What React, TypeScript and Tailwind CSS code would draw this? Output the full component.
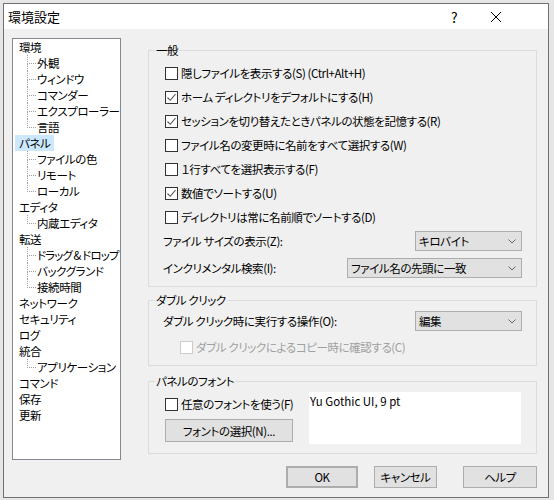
import type { ReactNode } from "react";

type TreeNode = { label: string; children?: string[]; selected?: boolean };

const TREE: TreeNode[] = [
  { label: "環境", children: ["外観", "ウィンドウ", "コマンダー", "エクスプローラー", "言語"] },
  { label: "パネル", children: ["ファイルの色", "リモート", "ローカル"], selected: true },
  { label: "エディタ", children: ["内蔵エディタ"] },
  { label: "転送", children: ["ドラッグ & ドロップ", "バックグランド", "接続時間"] },
  { label: "ネットワーク" },
  { label: "セキュリティ" },
  { label: "ログ" },
  { label: "統合", children: ["アプリケーション"] },
  { label: "コマンド" },
  { label: "保存" },
  { label: "更新" },
];

const GENERAL = [
  { label: "隠しファイルを表示する(S) (Ctrl+Alt+H)", checked: false },
  { label: "ホーム ディレクトリをデフォルトにする(H)", checked: true },
  { label: "セッションを切り替えたときパネルの状態を記憶する(R)", checked: true },
  { label: "ファイル名の変更時に名前をすべて選択する(W)", checked: false },
  { label: "１行すべてを選択表示する(F)", checked: false },
  { label: "数値でソートする(U)", checked: true },
  { label: "ディレクトリは常に名前順でソートする(D)", checked: false },
];

function CheckBox({ checked, disabled }: { checked?: boolean; disabled?: boolean }) {
  return (
    <span
      className={`flex h-[13px] w-[13px] shrink-0 items-center justify-center border bg-white ${
        disabled ? "border-[#cccccc]" : "border-[#333333]"
      }`}
    >
      {checked && (
        <svg viewBox="0 0 11 11" className="h-[11px] w-[11px]">
          <path d="M1.5 5.5 L4.3 8.3 L9.5 2.2" fill="none" stroke="#5a5a5a" strokeWidth="1.1" />
        </svg>
      )}
    </span>
  );
}

function Select({ value, width }: { value: string; width: string }) {
  return (
    <div
      className={`flex h-[20px] items-center justify-between border border-[#adadad] bg-[#e1e1e1] pl-[3px] pr-[5px] ${width}`}
    >
      <span className="whitespace-nowrap">{value}</span>
      <svg viewBox="0 0 8 5" className="h-[5px] w-[8px]">
        <path d="M0.5 0.5 L4 4 L7.5 0.5" fill="none" stroke="#666666" strokeWidth="1" />
      </svg>
    </div>
  );
}

function Group({ title, children, className = "" }: { title: string; children: ReactNode; className?: string }) {
  return (
    <fieldset className={`border border-[#dcdcdc] ${className}`}>
      <legend className="ml-[6px] px-[1px] leading-[16px]">{title}</legend>
      {children}
    </fieldset>
  );
}

function Button({ children, className = "" }: { children: ReactNode; className?: string }) {
  return (
    <div className={`flex items-center justify-center whitespace-nowrap border border-[#adadad] bg-[#e1e1e1] ${className}`}>
      {children}
    </div>
  );
}

function Tree() {
  return (
    <div className="h-[422px] w-[109px] shrink-0 overflow-hidden border border-[#828790] bg-white">
      {TREE.map((node) => (
        <div key={node.label}>
          <div className="flex h-[16px] items-center pl-[2px]">
            <span
              className={`flex h-[16px] items-center whitespace-nowrap px-[4px] ${node.selected ? "bg-[#cce8ff]" : ""}`}
            >
              {node.label}
            </span>
          </div>
          {node.children?.map((child, i) => {
            const last = i === node.children!.length - 1;
            return (
              <div key={child} className="flex h-[16px] items-center">
                <div className="ml-[14px] flex h-full w-[9px] shrink-0 flex-col">
                  <div className="h-[9px] border-b border-l border-dotted border-[#a0a0a0]" />
                  {!last && <div className="flex-1 border-l border-dotted border-[#a0a0a0]" />}
                </div>
                <span className={`whitespace-nowrap pl-[1px] ${child.length > 8 ? "tracking-[-0.9px]" : ""}`}>
                  {child}
                </span>
              </div>
            );
          })}
        </div>
      ))}
    </div>
  );
}

export default function App() {
  return (
    <div className="h-[500px] w-[554px] overflow-hidden bg-[#e6e6e6] p-[3px] pr-[5px] font-['Noto_Sans_CJK_JP',sans-serif] text-[11.5px] leading-[16px] tracking-[-0.4px] text-black [font-feature-settings:'palt']">
      <div className="flex h-[495px] flex-col border border-[#707070] bg-[#f0f0f0]">
        {/* title bar */}
        <div className="flex h-[25px] shrink-0 items-center justify-between bg-white pl-[4px]">
          <span className="text-[13px] tracking-normal">環境設定</span>
          <div className="flex h-full items-center pr-[31px]">
            <span className="w-[42px] text-center text-[14px]">?</span>
            <span className="flex w-[42px] justify-center">
              <svg viewBox="0 0 10 10" className="h-[10px] w-[10px]">
                <path d="M0 0 L10 10 M10 0 L0 10" stroke="#000" strokeWidth="1" />
              </svg>
            </span>
          </div>
        </div>

        {/* body */}
        <div className="flex flex-1 pl-[8px] pr-[11px] pt-[9px]">
          <Tree />
          <div className="ml-[27px] flex flex-1 flex-col pt-[4px]">
            <Group title="一般" className="pb-[8px]">
              <div className="px-[14px] pt-[3px]">
                {GENERAL.map((item) => (
                  <div key={item.label} className="ml-[2px] flex h-[24px] items-center gap-[3px]">
                    <CheckBox checked={item.checked} />
                    <span className="whitespace-nowrap">{item.label}</span>
                  </div>
                ))}
                <div className="mt-[2px] flex h-[20px] items-center justify-between">
                  <span>ファイル サイズの表示(Z):</span>
                  <Select value="キロバイト" width="w-[107px]" />
                </div>
                <div className="mt-[7px] flex h-[20px] items-center justify-between">
                  <span>インクリメンタル検索(I):</span>
                  <Select value="ファイル名の先頭に一致" width="w-[175px]" />
                </div>
              </div>
            </Group>

            <Group title="ダブル クリック" className="mt-[5px] pb-[8px]">
              <div className="px-[14px] pt-[3px]">
                <div className="flex h-[20px] items-center justify-between">
                  <span>ダブル クリック時に実行する操作(O):</span>
                  <Select value="編集" width="w-[107px]" />
                </div>
                <div className="ml-[17px] mt-[6px] flex h-[20px] items-center gap-[3px] text-[#a0a0a0]">
                  <CheckBox disabled />
                  <span>ダブル クリックによるコピー時に確認する(C)</span>
                </div>
              </div>
            </Group>

            <Group title="パネルのフォント" className="mt-[7px] pb-[9px]">
              <div className="flex gap-[16px] pl-[16px] pr-[15px] pt-[3px]">
                <div className="flex w-[128px] shrink-0 flex-col pt-[2px]">
                  <div className="flex h-[20px] items-center gap-[3px]">
                    <CheckBox />
                    <span className="whitespace-nowrap">任意のフォントを使う(F)</span>
                  </div>
                  <Button className="mt-[5px] h-[23px] w-[128px]">フォントの選択(N)...</Button>
                </div>
                <div className="h-[52px] flex-1 bg-white pl-[1px] pt-[1px] tracking-normal">Yu Gothic UI, 9 pt</div>
              </div>
            </Group>

            <div className="mt-[12px] flex justify-end">
              <Button className="h-[22px] w-[72px] border-2 border-[#0078d7]">OK</Button>
              <Button className="ml-[16px] h-[22px] w-[63px]">キャンセル</Button>
              <Button className="ml-[26px] h-[22px] w-[74px]">ヘルプ</Button>
            </div>
          </div>
        </div>
      </div>
    </div>
  );
}
